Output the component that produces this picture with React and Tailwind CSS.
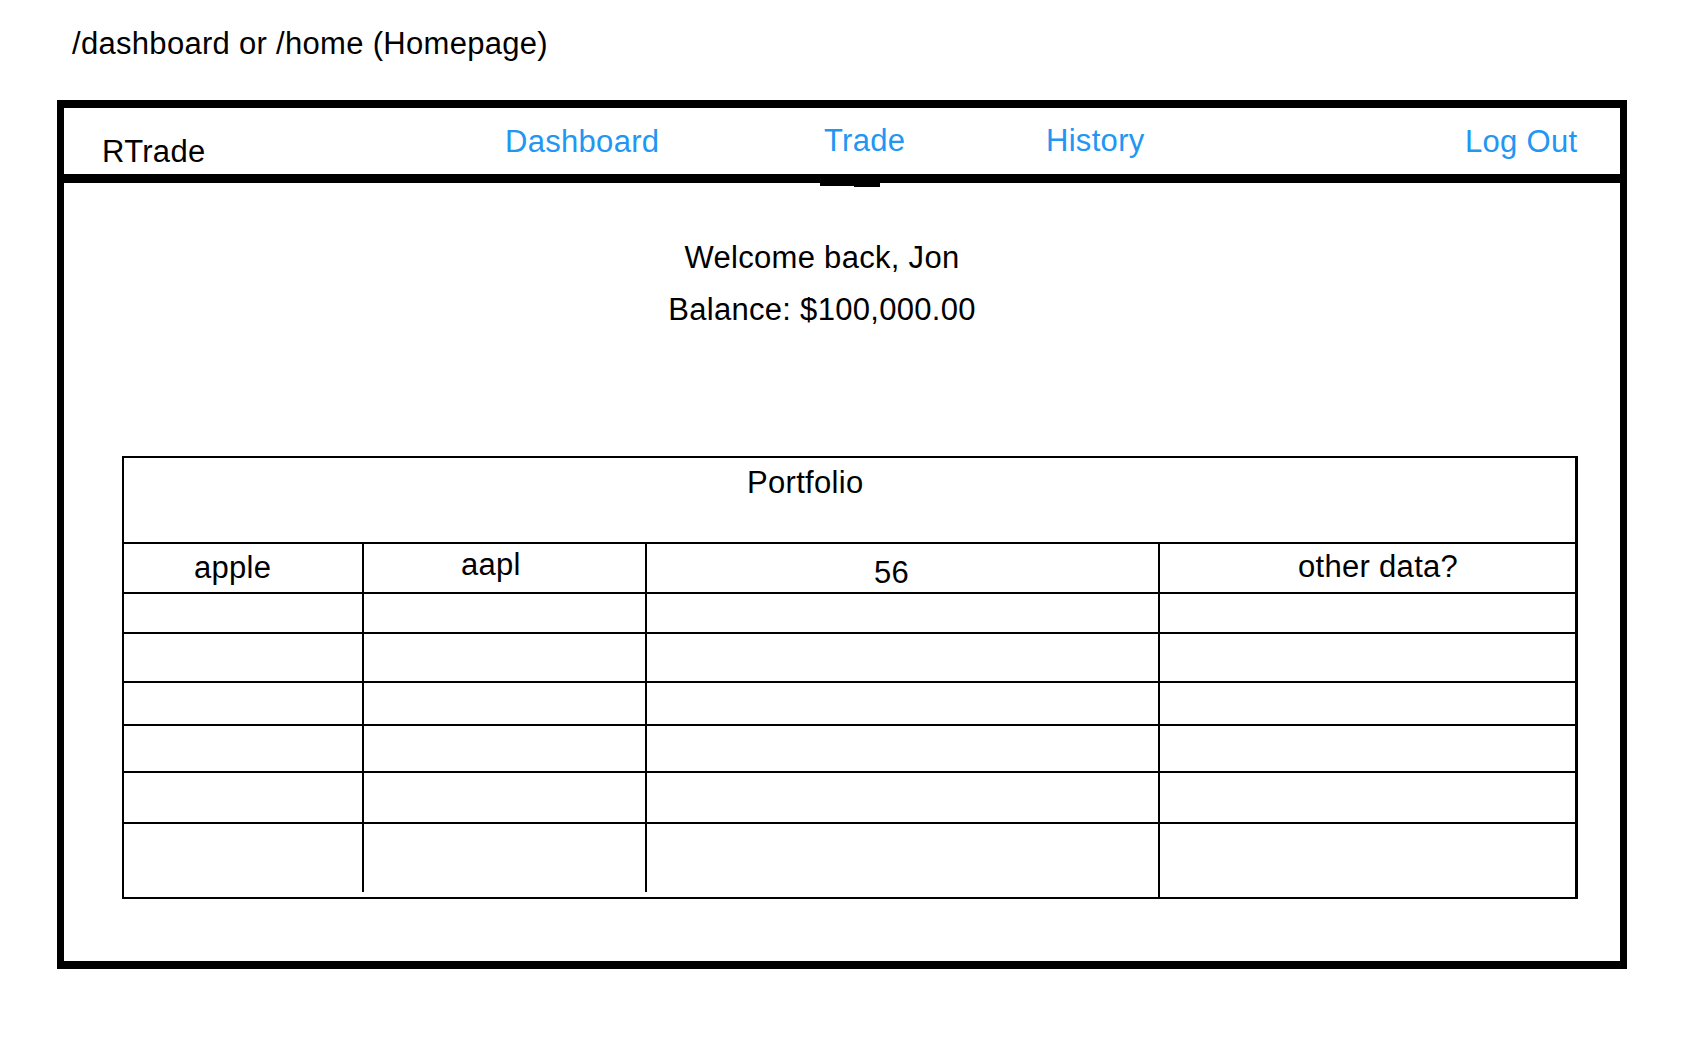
export default function App() {
  return (
    <div className="min-h-screen bg-white pt-[28px] font-['Liberation_Sans',Arial,sans-serif] text-black">
      <div className="ml-[72px] text-[31px] leading-none tracking-[0.3px]">
        /dashboard or /home (Homepage)
      </div>

      <div className="relative ml-[57px] mt-[41px] w-[1570px] border-[7px] border-t-[8px] border-b-[8px] border-black">
        <nav className="grid h-[75px] grid-cols-[403px_319px_222px_419px_1fr] border-b-[9px] border-black pl-[38px] text-[31px] leading-none tracking-[0.3px]">
          <span className="mt-[27.8px]">RTrade</span>
          <a className="mt-[17.8px] text-[#2196f3]">Dashboard</a>
          <a className="mt-[16.8px] text-[#2196f3]">Trade</a>
          <a className="mt-[16.8px] text-[#2196f3]">History</a>
          <a className="mt-[17.8px] text-[#2196f3]">Log Out</a>
        </nav>
        <div className="absolute left-[756px] top-[75px] h-[3px] w-[36px] bg-black" />
        <div className="absolute left-[790px] top-[75px] h-[4px] w-[26px] bg-black" />

        <div className="flex flex-col items-center pr-[40px] pt-[58.8px] text-[31px] leading-none tracking-[0.3px]">
          <p>Welcome back, Jon</p>
          <p className="mt-[21px]">Balance: $100,000.00</p>
        </div>

        <div className="mb-[62px] ml-[58px] mr-[42px] mt-[131.2px] border-2 border-r-[3px] border-black text-[31px] leading-none tracking-[0.3px]">
          <div className="h-[86px] border-b-2 border-black pl-[623px] pt-[8.8px]">Portfolio</div>

          <div className="grid h-[50px] grid-cols-[240px_283px_513px_1fr] border-b-2 border-black">
            <div className="border-r-2 border-black pl-[70px] pt-[7.8px]">apple</div>
            <div className="border-r-2 border-black pl-[97px] pt-[4.8px]">aapl</div>
            <div className="border-r-2 border-black pl-[227px] pt-[12.8px]">56</div>
            <div className="pl-[138px] pt-[6.8px]">other data?</div>
          </div>

          <div className="grid h-[40px] grid-cols-[240px_283px_513px_1fr] border-b-2 border-black">
            <div className="border-r-2 border-black" />
            <div className="border-r-2 border-black" />
            <div className="border-r-2 border-black" />
            <div />
          </div>

          <div className="grid h-[49px] grid-cols-[240px_283px_513px_1fr] border-b-2 border-black">
            <div className="border-r-2 border-black" />
            <div className="border-r-2 border-black" />
            <div className="border-r-2 border-black" />
            <div />
          </div>

          <div className="grid h-[43px] grid-cols-[240px_283px_513px_1fr] border-b-2 border-black">
            <div className="border-r-2 border-black" />
            <div className="border-r-2 border-black" />
            <div className="border-r-2 border-black" />
            <div />
          </div>

          <div className="grid h-[47px] grid-cols-[240px_283px_513px_1fr] border-b-2 border-black">
            <div className="border-r-2 border-black" />
            <div className="border-r-2 border-black" />
            <div className="border-r-2 border-black" />
            <div />
          </div>

          <div className="grid h-[51px] grid-cols-[240px_283px_513px_1fr] border-b-2 border-black">
            <div className="border-r-2 border-black" />
            <div className="border-r-2 border-black" />
            <div className="border-r-2 border-black" />
            <div />
          </div>

          <div className="grid h-[73px] grid-cols-[240px_283px_513px_1fr]">
            <div className="pb-[5px]">
              <div className="h-full border-r-2 border-black" />
            </div>
            <div className="pb-[5px]">
              <div className="h-full border-r-2 border-black" />
            </div>
            <div className="border-r-2 border-black" />
            <div />
          </div>
        </div>
      </div>
    </div>
  );
}
